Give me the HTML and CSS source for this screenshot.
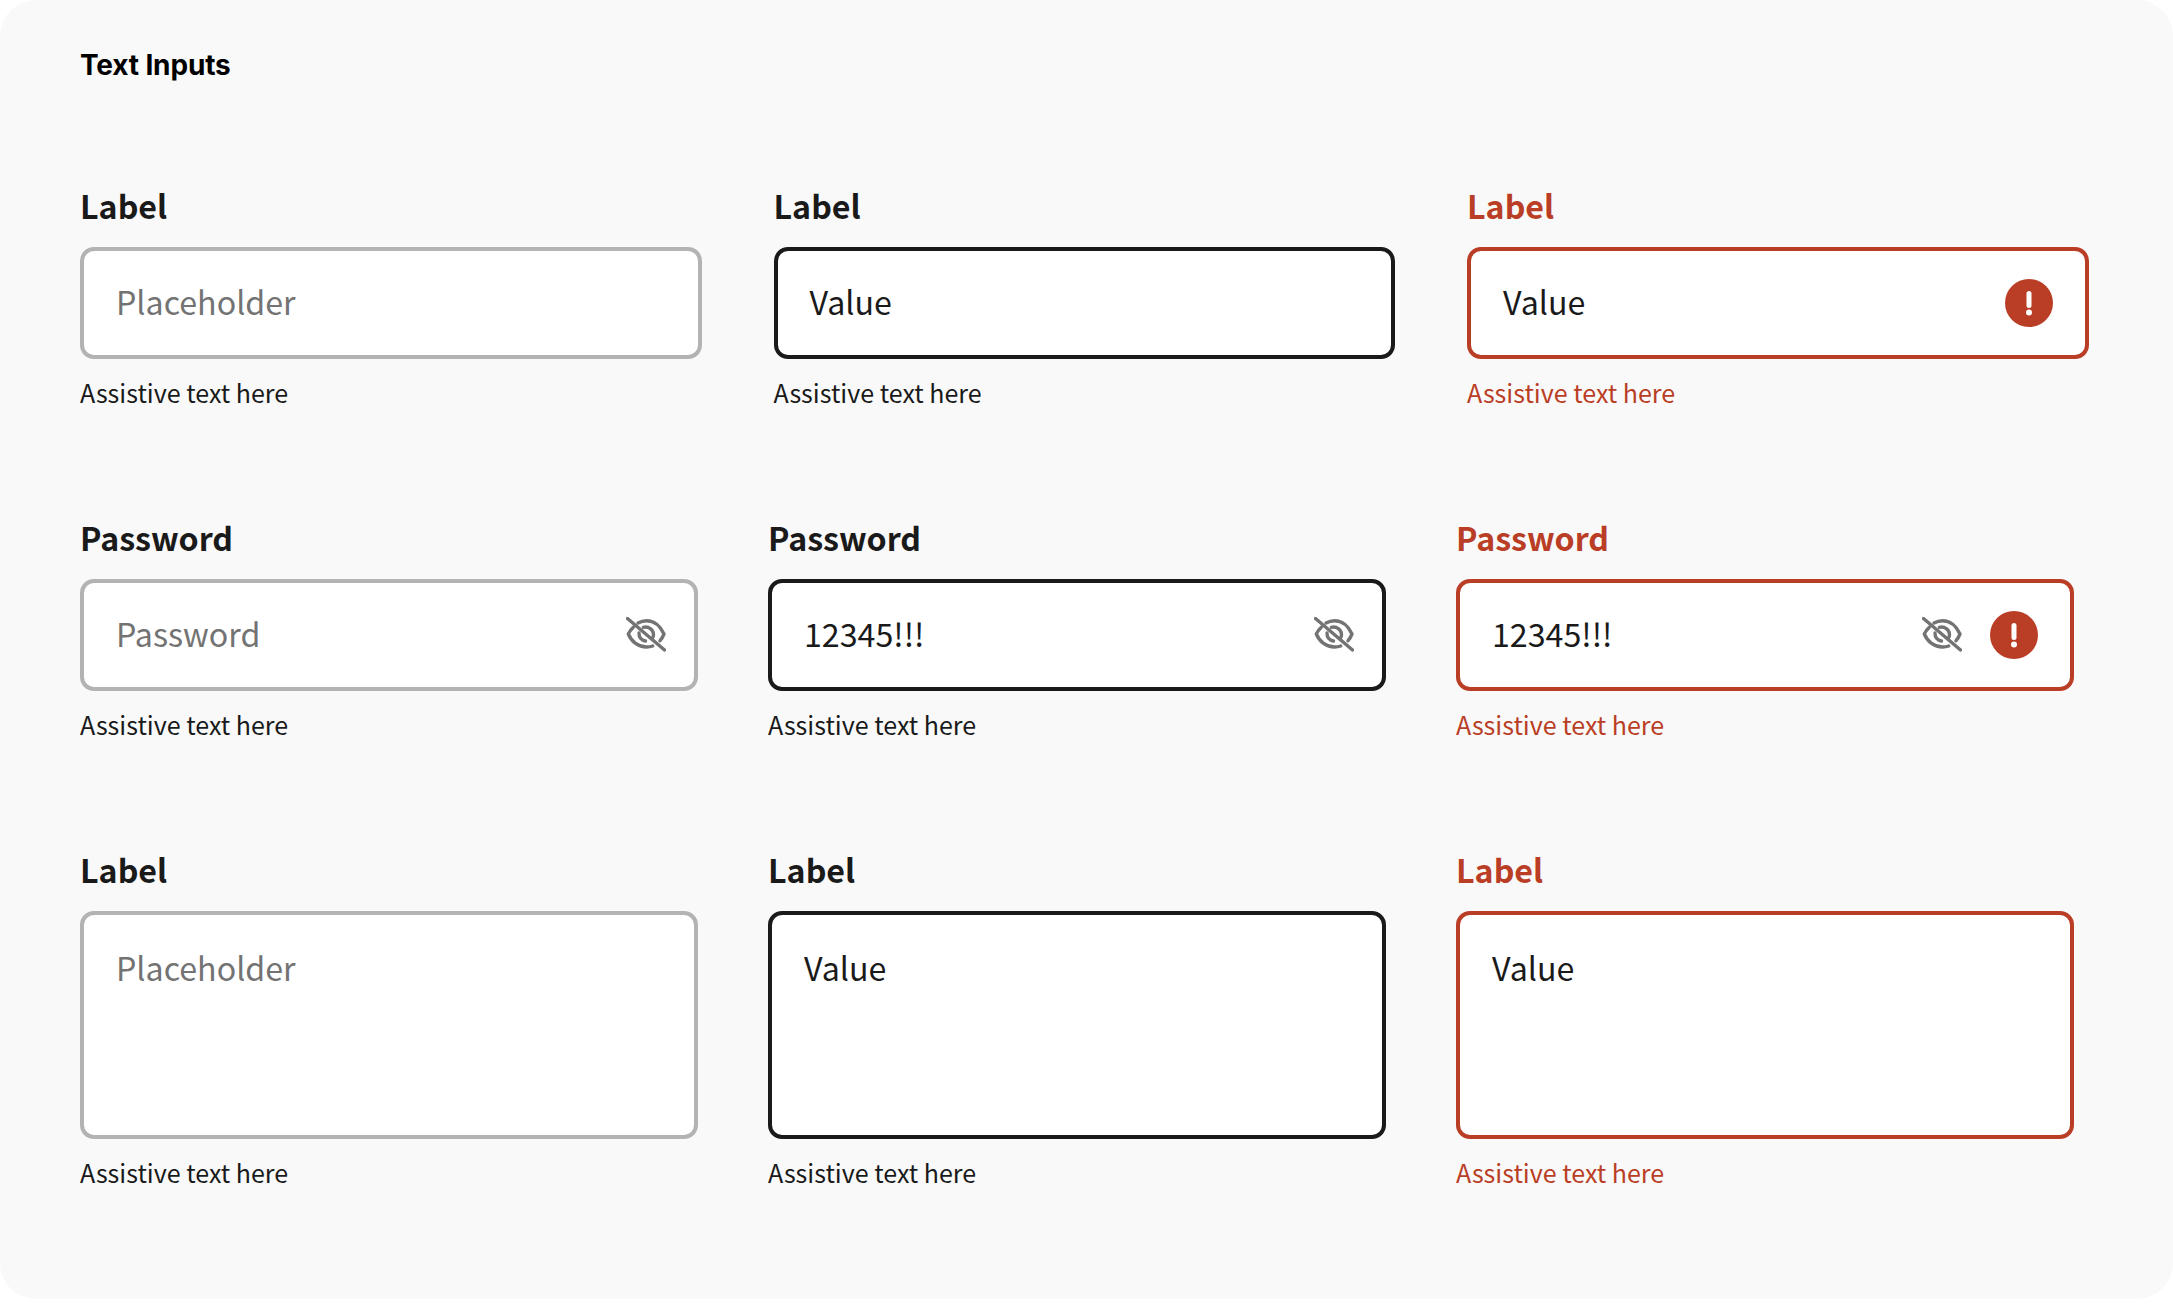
FILE: index.html
```html
<!DOCTYPE html>
<html lang="en">
<head>
<meta charset="utf-8">
<title>Text Inputs</title>
<link rel="stylesheet" href="styles.css">
</head>
<body>
<svg class="defs" width="0" height="0" aria-hidden="true">
  <symbol id="eye" viewBox="0 0 40 36">
    <g fill="none" stroke="#737373" stroke-width="3.400" stroke-linecap="round" stroke-linejoin="round">
      <path d="M1.500 1.500 L38.500 33"/>
      <path d="M12 6 C14.500 4.600 17.500 3.700 20.500 3.700 C28 3.700 34.500 9 38 17 C37 19.500 35.800 21.800 34 23.700"/>
      <path d="M7.300 10.300 C5 12.500 3.400 14.700 2.300 17 C5.500 24.800 12.500 30 20.500 30 C22.700 30 24.800 29.700 26.700 29"/>
      <path d="M17.300 10.300 C22.500 9 27.500 12.500 27.500 17.500 C27.500 19 27 20.600 26 22"/>
      <path d="M13 16 C12.800 20.500 15.500 23.500 19.500 24"/>
    </g>
  </symbol>
  <symbol id="alert" viewBox="0 0 48 48">
    <circle cx="24" cy="24" r="24" fill="#b93e25"/>
    <rect x="21.500" y="12" width="5" height="17" rx="2.500" fill="#fff"/>
    <circle cx="24" cy="33.500" r="3" fill="#fff"/>
  </symbol>
</svg>
<main class="card">
  <h1 class="title">Text Inputs</h1>

  <section class="row row-wide">
    <div class="field">
      <div class="label">Label</div>
      <div class="box box-idle"><span class="placeholder">Placeholder</span></div>
      <div class="help">Assistive text here</div>
    </div>
    <div class="field">
      <div class="label">Label</div>
      <div class="box box-active"><span class="value">Value</span></div>
      <div class="help">Assistive text here</div>
    </div>
    <div class="field field-error">
      <div class="label">Label</div>
      <div class="box box-error"><span class="value">Value</span>
        <span class="icons"><svg class="icon-alert"><use href="#alert"/></svg></span>
      </div>
      <div class="help">Assistive text here</div>
    </div>
  </section>

  <section class="row">
    <div class="field">
      <div class="label">Password</div>
      <div class="box box-idle"><span class="placeholder">Password</span>
        <span class="icons"><svg class="icon-eye"><use href="#eye"/></svg></span>
      </div>
      <div class="help">Assistive text here</div>
    </div>
    <div class="field">
      <div class="label">Password</div>
      <div class="box box-active"><span class="value">12345!!!</span>
        <span class="icons"><svg class="icon-eye"><use href="#eye"/></svg></span>
      </div>
      <div class="help">Assistive text here</div>
    </div>
    <div class="field field-error">
      <div class="label">Password</div>
      <div class="box box-error"><span class="value">12345!!!</span>
        <span class="icons"><svg class="icon-eye"><use href="#eye"/></svg><svg class="icon-alert"><use href="#alert"/></svg></span>
      </div>
      <div class="help">Assistive text here</div>
    </div>
  </section>

  <section class="row">
    <div class="field">
      <div class="label">Label</div>
      <div class="box box-area box-idle"><span class="placeholder">Placeholder</span></div>
      <div class="help">Assistive text here</div>
    </div>
    <div class="field">
      <div class="label">Label</div>
      <div class="box box-area box-active"><span class="value">Value</span></div>
      <div class="help">Assistive text here</div>
    </div>
    <div class="field field-error">
      <div class="label">Label</div>
      <div class="box box-area box-error"><span class="value">Value</span></div>
      <div class="help">Assistive text here</div>
    </div>
  </section>
</main>
</body>
</html>
```

FILE: styles.css
```css
* { box-sizing: border-box; }
html, body { margin: 0; padding: 0; background: #fff; }
body { width: 2173px; height: 1308px; overflow: hidden; font-family: "Noto Sans CJK SC", "Noto Sans", sans-serif; color: #1a1a1a; }
.defs { position: absolute; }
.card { height: 1299px; background: #f9f9f9; border-radius: 36px; padding: 48px 0 0 80px; }
.title { margin: 0 0 103px; font-family: Inter, sans-serif; font-size: 28px; font-weight: 700; letter-spacing: -0.15px; line-height: 34px; color: #000; height: 34px; }
.row { display: flex; gap: 70px; margin-bottom: 107px; }
.row-wide { gap: 72px; }
.field { width: 618px; }
.row-wide .field { width: 621.5px; }
.label { font-size: 32.2px; font-weight: 700; line-height: 40px; margin-bottom: 22px; }
.box { height: 112px; background: #fff; border: 4px solid; border-radius: 14px; display: flex; align-items: center; justify-content: space-between; padding: 0 28px 0 32px; font-size: 32.2px; line-height: 48px; }
.box > span:first-child { margin-bottom: 4px; }
.box-area { height: 228px; align-items: flex-start; padding-top: 28px; }
.box-idle { border-color: #b3b3b3; }
.box-active { border-color: #1a1a1a; }
.box-error { border-color: #b93e25; }
.placeholder { color: #737373; }
.value { color: #1a1a1a; }
.icons { display: flex; align-items: center; gap: 28px; }
.icon-eye { width: 40px; height: 36px; display: block; }
.icon-alert { width: 48px; height: 48px; display: block; margin-right: 4px; }
.help { font-size: 25.05px; line-height: 36px; margin-top: 15px; }
.field-error .label, .field-error .help { color: #b93e25; }
```
